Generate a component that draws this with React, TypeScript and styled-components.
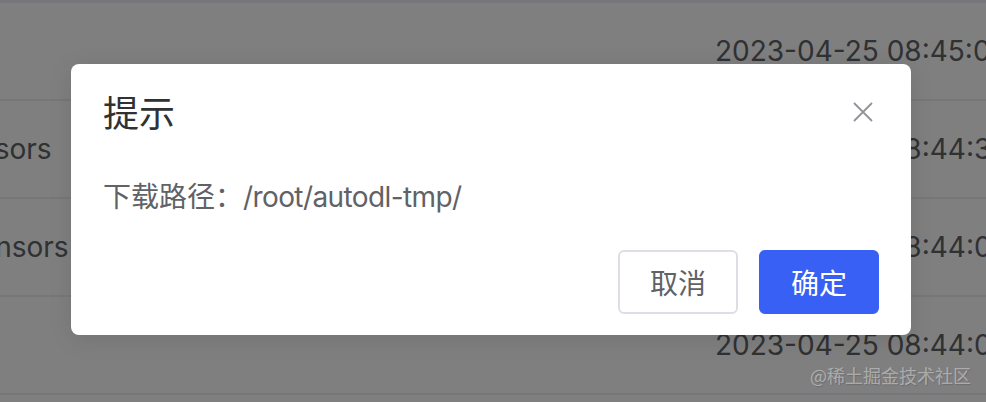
import React from "react";
import styled, { createGlobalStyle } from "styled-components";

const GlobalStyle = createGlobalStyle`
  html, body {
    margin: 0;
    padding: 0;
  }
  body {
    background: #fff;
    font-family: Inter, "Noto Sans CJK SC", sans-serif;
  }
`;

const files = [
  { name: "", time: "2023-04-25 08:45:06" },
  { name: "model.safetensors", time: "2023-04-25 08:44:36" },
  { name: "model0.safetensors", time: "2023-04-25 08:44:05" },
  { name: "", time: "2023-04-25 08:44:01" },
  { name: "", time: "" },
];

const CloseIcon = () => (
  <svg width="20" height="20" viewBox="0 0 20 20">
    <path d="M1 1L19 19M19 1L1 19" stroke="#909399" strokeWidth="1.8" fill="none" />
  </svg>
);

export default function App() {
  return (
    <Page>
      <GlobalStyle />
      <Table>
        {files.map((f, i) => (
          <Row key={i}>
            <NameCell>{f.name}</NameCell>
            <TimeCell>{f.time}</TimeCell>
          </Row>
        ))}
      </Table>

      <Overlay>
        <MessageBox>
          <Header>
            <Title>提示</Title>
            <CloseBtn aria-label="关闭">
              <CloseIcon />
            </CloseBtn>
          </Header>
          <Content>
            下载路径：<Path>/root/autodl-tmp/</Path>
          </Content>
          <Footer>
            <Button>取消</Button>
            <Button primary>确定</Button>
          </Footer>
        </MessageBox>
      </Overlay>

      <Watermark>@稀土掘金技术社区</Watermark>
    </Page>
  );
}

const Page = styled.div`
  position: relative;
  width: 100vw;
  height: 100vh;
  overflow: hidden;
  background: #fff;
`;

const Table = styled.div`
  width: 1400px;
  margin-left: -193px;
  border-top: 3px solid #ebeef5;
`;

const Row = styled.div`
  display: grid;
  grid-template-columns: 908px 1fr;
  align-items: center;
  height: 96px;
  border-bottom: 2px solid #ebeef5;
  font-size: 28px;
  color: #606266;
`;

const NameCell = styled.div`
  white-space: nowrap;
`;

const TimeCell = styled.div`
  white-space: nowrap;
`;

const Overlay = styled.div`
  position: absolute;
  inset: 0;
  background: rgba(0, 0, 0, 0.5);
  display: flex;
  align-items: center;
  justify-content: center;
  padding: 0 4px 3px 0;
`;

const MessageBox = styled.div`
  width: 840px;
  box-sizing: border-box;
  background: #fff;
  border-radius: 8px;
  box-shadow: 0 4px 24px rgba(0, 0, 0, 0.1);
  padding-bottom: 21px;
`;

const Header = styled.div`
  display: flex;
  align-items: center;
  justify-content: space-between;
  padding: 32px 38px 0 32px;
`;

const Title = styled.div`
  font-size: 36px;
  line-height: 36px;
  color: #303133;
`;

const CloseBtn = styled.button`
  display: flex;
  padding: 0;
  margin-top: -4px;
  border: none;
  background: none;
  cursor: pointer;
`;

const Content = styled.div`
  margin-top: 45px;
  padding: 0 32px;
  font-size: 28px;
  line-height: 40px;
  color: #606266;
`;

const Path = styled.span`
  letter-spacing: -0.6px;
`;

const Footer = styled.div`
  display: flex;
  justify-content: flex-end;
  gap: 21px;
  padding: 33px 32px 0;
`;

const Button = styled.button<{ primary?: boolean }>`
  height: 64px;
  padding: 0 30px;
  box-sizing: border-box;
  border-radius: 6px;
  font-family: inherit;
  font-size: 28px;
  cursor: pointer;
  border: 2px solid ${(p) => (p.primary ? "#3860f4" : "#dcdfe6")};
  background: ${(p) => (p.primary ? "#3860f4" : "#fff")};
  color: ${(p) => (p.primary ? "#fff" : "#606266")};
`;

const Watermark = styled.div`
  position: absolute;
  right: 15px;
  bottom: 17px;
  font-size: 18px;
  line-height: 20px;
  color: rgba(255, 255, 255, 0.4);
  text-shadow: 1px 1px 1px rgba(0, 0, 0, 0.15);
  font-family: "Noto Sans CJK SC", sans-serif;
`;
